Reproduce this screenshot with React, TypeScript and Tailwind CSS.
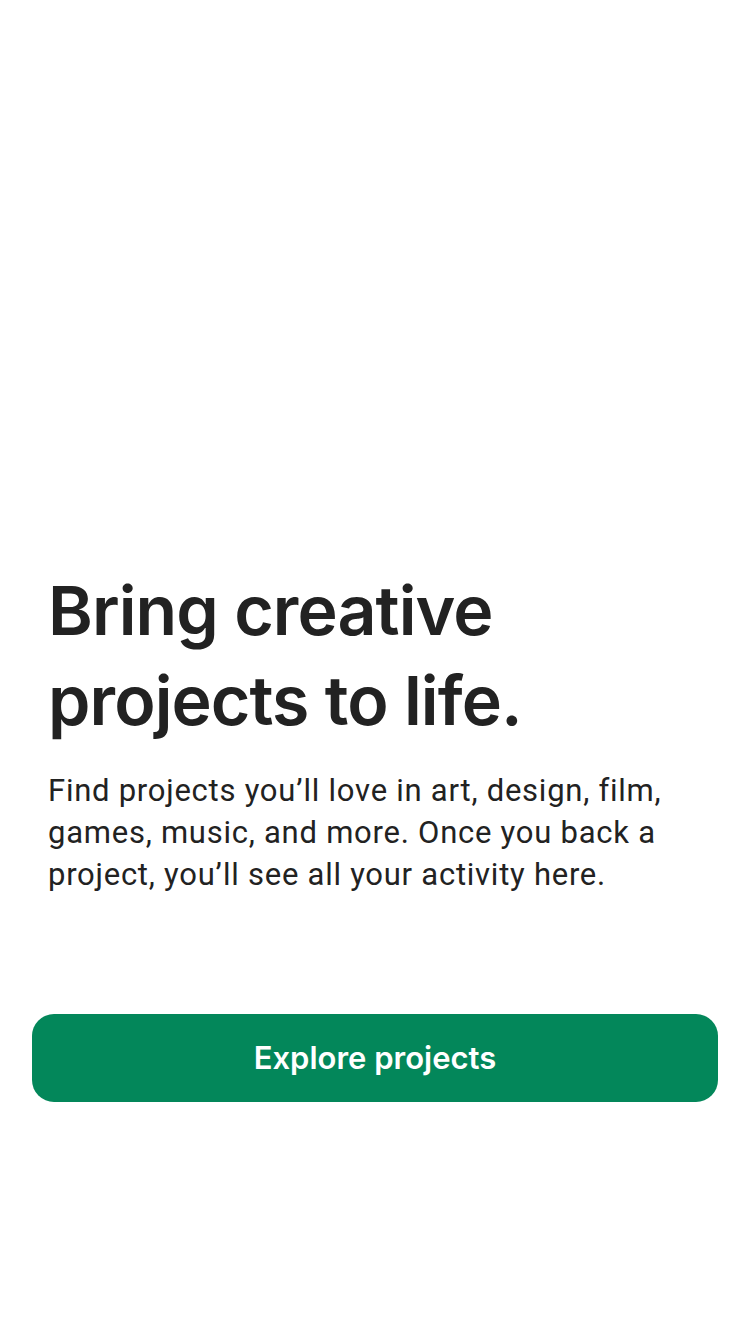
export default function App() {
  return (
    <div className="min-h-[1334px] w-[750px] bg-white font-['Inter',sans-serif] text-[#222222]">
      <div className="px-12 pt-[565px]">
        <h1 className="text-[68px] font-semibold leading-[90px] tracking-[-0.9px]">
          Bring creative
          <br />
          projects to life.
        </h1>
        <p className="mt-[25px] font-['Roboto',sans-serif] text-[31px] leading-[42px] tracking-[0.75px]">
          Find projects you’ll love in art, design, film, games, music, and more. Once you back a project, you’ll see
          all your activity here.
        </p>
      </div>
      <div className="px-8 pt-[118px]">
        <button className="flex h-[88px] w-full items-center justify-center rounded-[22px] bg-[#03875a] text-[31px] font-semibold text-white">
          Explore projects
        </button>
      </div>
    </div>
  )
}
